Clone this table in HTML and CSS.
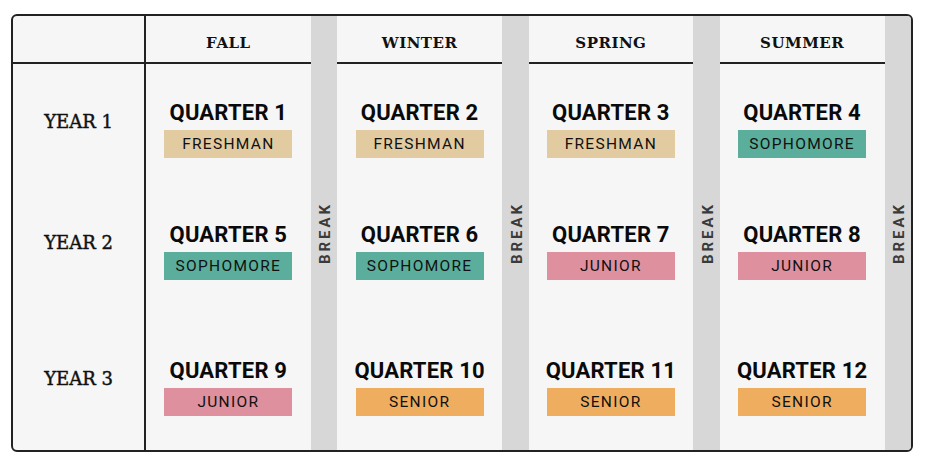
FILE: index.html
```html
<!DOCTYPE html>
<html lang="en">
<head>
<meta charset="utf-8">
<title>Quarter Schedule</title>
<link rel="stylesheet" href="styles.css">
</head>
<body>
<div class="board">
  <div class="brk b1"><span>BREAK</span></div>
  <div class="brk b2"><span>BREAK</span></div>
  <div class="brk b3"><span>BREAK</span></div>
  <div class="brk b4"><span>BREAK</span></div>

  <div class="corner"></div>
  <div class="head">FALL</div>
  <div class="head">WINTER</div>
  <div class="head">SPRING</div>
  <div class="head">SUMMER</div>

  <div class="year">YEAR 1</div>
  <div class="q"><div class="qt">QUARTER 1</div><div class="tag fresh">FRESHMAN</div></div>
  <div class="q"><div class="qt">QUARTER 2</div><div class="tag fresh">FRESHMAN</div></div>
  <div class="q"><div class="qt">QUARTER 3</div><div class="tag fresh">FRESHMAN</div></div>
  <div class="q"><div class="qt">QUARTER 4</div><div class="tag soph">SOPHOMORE</div></div>

  <div class="year">YEAR 2</div>
  <div class="q"><div class="qt">QUARTER 5</div><div class="tag soph">SOPHOMORE</div></div>
  <div class="q"><div class="qt">QUARTER 6</div><div class="tag soph">SOPHOMORE</div></div>
  <div class="q"><div class="qt">QUARTER 7</div><div class="tag junior">JUNIOR</div></div>
  <div class="q"><div class="qt">QUARTER 8</div><div class="tag junior">JUNIOR</div></div>

  <div class="year">YEAR 3</div>
  <div class="q"><div class="qt">QUARTER 9</div><div class="tag junior">JUNIOR</div></div>
  <div class="q"><div class="qt">QUARTER 10</div><div class="tag senior">SENIOR</div></div>
  <div class="q"><div class="qt">QUARTER 11</div><div class="tag senior">SENIOR</div></div>
  <div class="q"><div class="qt">QUARTER 12</div><div class="tag senior">SENIOR</div></div>
</div>
</body>
</html>
```

FILE: styles.css
```css
html, body {
  margin: 0;
  padding: 0;
  background: #ffffff;
}

body {
  font-family: Roboto, "Liberation Sans", sans-serif;
}

.board {
  box-sizing: border-box;
  margin: 14px 0 0 11px;
  width: 902px;
  height: 438px;
  border: 2px solid #222222;
  border-radius: 6px;
  background: #f6f6f6;
  overflow: hidden;
  display: grid;
  grid-template-columns: 133px 1fr 26.5px 1fr 26.5px 1fr 26.5px 1fr 26.5px;
  grid-template-rows: 48px 114px 129px 1fr;
}

.brk {
  grid-row: 1 / span 4;
  background: #d7d7d7;
  display: flex;
  align-items: center;
  justify-content: center;
}
.b1 { grid-column: 3; }
.b2 { grid-column: 5; }
.b3 { grid-column: 7; }
.b4 { grid-column: 9; }

.brk span {
  transform: rotate(-90deg);
  white-space: nowrap;
  font-family: Roboto, sans-serif;
  font-weight: 700;
  font-size: 15px;
  letter-spacing: 3px;
  color: #3a3a3a;
  margin-left: 3px;
}

.corner {
  border-right: 2px solid #222222;
  border-bottom: 2px solid #222222;
}

.head {
  border-bottom: 2px solid #222222;
  display: flex;
  align-items: center;
  justify-content: center;
  padding-top: 8px;
  font-family: "DejaVu Serif", serif;
  font-weight: 700;
  font-size: 15px;
  letter-spacing: 0.5px;
  color: #111;
}

.year {
  border-right: 2px solid #222222;
  display: flex;
  align-items: center;
  justify-content: center;
  font-family: "DejaVu Serif", serif;
  font-size: 18px;
  color: #111;
  -webkit-text-stroke: 0.45px #111;
}

.q {
  display: flex;
  flex-direction: column;
  align-items: center;
  justify-content: center;
  padding-top: 16px;
}

.qt {
  font-family: Roboto, sans-serif;
  font-weight: 700;
  font-size: 22px;
  line-height: 26px;
  color: #0a0a0a;
  letter-spacing: 0.2px;
}

.tag {
  margin-top: 4px;
  width: 128px;
  height: 28px;
  display: flex;
  align-items: center;
  justify-content: center;
  font-family: Roboto, sans-serif;
  font-size: 15.5px;
  letter-spacing: 1.3px;
  color: #111;
}

.fresh { background: #e2cba1; }
.soph { background: #5aae9b; }
.junior { background: #de909f; }
.senior { background: #efad60; }
```
